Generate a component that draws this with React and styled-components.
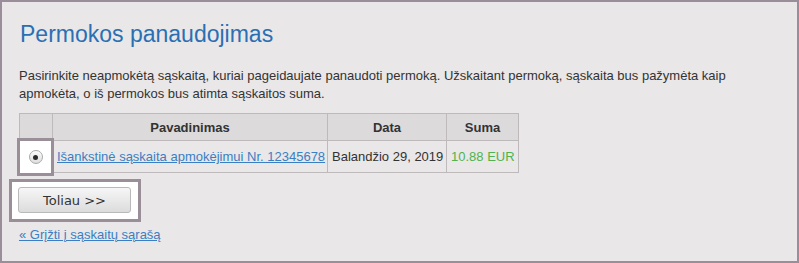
import React from "react";
import styled, { createGlobalStyle } from "styled-components";

const Global = createGlobalStyle`
  html, body { margin: 0; padding: 0; }
  body { font-family: "Liberation Sans", Arial, sans-serif; }
`;

const Frame = styled.div`
  box-sizing: border-box;
  width: 799px;
  height: 263px;
  border: 2px solid #9a8f98;
  background: #e9e7e8;
  padding: 18px 17px 0 17px;
  color: #333;
`;

const Title = styled.h1`
  margin: 0 0 0 1px;
  font-size: 23px;
  line-height: 28px;
  font-weight: normal;
  color: #2b6fb3;
`;

const Intro = styled.p`
  margin: 19px 0 10px 0;
  font-size: 13px;
  line-height: 18px;
  width: 740px;
`;

const Table = styled.table`
  border-collapse: collapse;
  table-layout: fixed;
  width: 499px;
  font-size: 13px;
`;

const Col = styled.col`
  width: ${(p) => p.$w}px;
`;

const Th = styled.th`
  background: #dcdadb;
  border: 1px solid #bebabc;
  height: 26px;
  padding: 0 4px;
  font-weight: bold;
  text-align: center;
  color: #333;
`;

const Td = styled.td`
  border: 1px solid #bebabc;
  height: 31px;
  padding: 0 4px;
  color: ${(p) => p.$color || "#333"};
  white-space: nowrap;
  position: relative;
`;

const Highlight = styled.div`
  position: absolute;
  left: -3px;
  top: -3px;
  width: 37px;
  height: 38px;
  box-sizing: border-box;
  border: 3px solid #9a8f98;
  background: #ffffff;
  display: flex;
  align-items: center;
  justify-content: center;
`;

const Radio = styled.span`
  width: 14px;
  height: 14px;
  box-sizing: border-box;
  border-radius: 50%;
  border: 1px solid #a9a9a9;
  background: linear-gradient(#fbfbfb, #dedede);
  display: flex;
  align-items: center;
  justify-content: center;
  box-shadow: inset 0 1px 0 #fff;
  &::after {
    content: "";
    width: 5px;
    height: 5px;
    border-radius: 50%;
    background: #2b2b2b;
  }
`;

const Link = styled.a`
  color: #3a7fc3;
  text-decoration: underline;
  font-size: 13px;
`;

const ButtonBox = styled.div`
  display: inline-block;
  margin: 6px 0 0 -10px;
  border: 3px solid #9a8f98;
  background: #ffffff;
  padding: 5px 7px 6px 6px;
`;

const Button = styled.button`
  width: 113px;
  height: 26px;
  box-sizing: border-box;
  border: 1px solid #b9b9b9;
  border-radius: 3px;
  background: linear-gradient(#f6f6f6, #dcdcdc);
  font-family: "DejaVu Sans", sans-serif;
  font-size: 13px;
  color: #333;
  padding: 0;
`;

const Back = styled.div`
  margin-top: 4px;
  font-size: 13px;
  line-height: 18px;
`;

export default function App() {
  return (
    <>
      <Global />
      <Frame>
        <Title>Permokos panaudojimas</Title>
        <Intro>
          Pasirinkite neapmokėtą sąskaitą, kuriai pageidaujate panaudoti permoką. Užskaitant
          permoką, sąskaita bus pažymėta kaip apmokėta, o iš permokos bus atimta sąskaitos suma.
        </Intro>
        <Table>
          <colgroup>
            <Col $w={33} />
            <Col $w={275} />
            <Col $w={119} />
            <Col $w={72} />
          </colgroup>
          <thead>
            <tr>
              <Th></Th>
              <Th>Pavadinimas</Th>
              <Th>Data</Th>
              <Th>Suma</Th>
            </tr>
          </thead>
          <tbody>
            <tr>
              <Td>
                <Highlight>
                  <Radio />
                </Highlight>
              </Td>
              <Td>
                <Link href="#">Išankstinė sąskaita apmokėjimui Nr. 12345678</Link>
              </Td>
              <Td>Balandžio 29, 2019</Td>
              <Td $color="#4fb34f">10.88 EUR</Td>
            </tr>
          </tbody>
        </Table>
        <ButtonBox>
          <Button>Toliau &gt;&gt;</Button>
        </ButtonBox>
        <Back>
          <Link href="#">« Grįžti į sąskaitų sąrašą</Link>
        </Back>
      </Frame>
    </>
  );
}
